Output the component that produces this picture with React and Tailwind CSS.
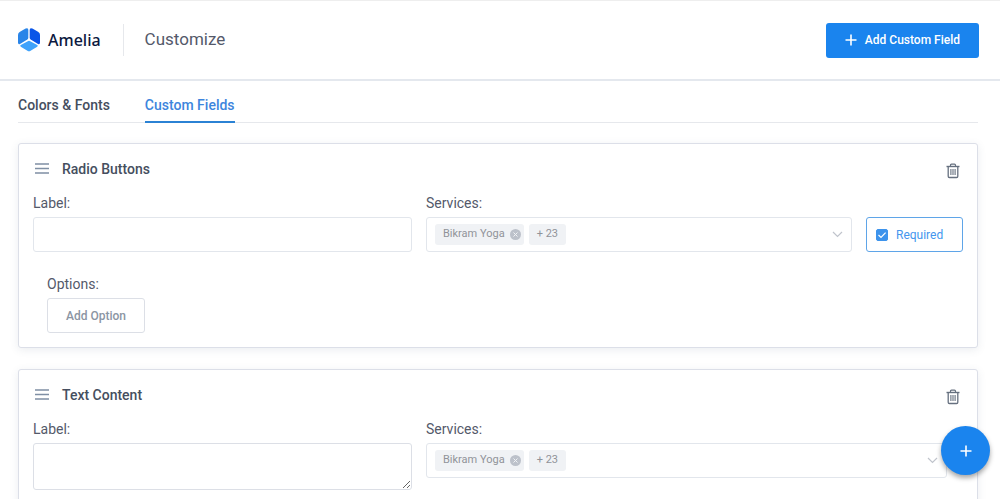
import React, { useState } from 'react';

const Logo = () => (
  <div className="flex items-center gap-[7px]">
    <svg width="24" height="26" viewBox="0 0 24 26" aria-hidden="true">
      <path d="M8.6 1.6 Q11.3 .4 11.3 3 V10.8 Q11.3 12 10.3 12.6 L3 16.9 Q1 17.8 1 15.6 V8 Q1 6 2.6 5 Z" fill="#2a85e8" />
      <path d="M15.4 1.6 Q12.7 .4 12.7 3 V10.8 Q12.7 12 13.7 12.6 L21 16.9 Q23 17.8 23 15.6 V8 Q23 6 21.4 5 Z" fill="#0a55e8" />
      <path d="M10.8 14.2 Q12 13.5 13.2 14.2 L20.2 18.1 Q21.5 18.9 20.2 19.7 L13.6 23.8 Q12 24.8 10.4 23.8 L3.8 19.7 Q2.5 18.9 3.8 18.1 Z" fill="#3fa2fb" />
    </svg>
    <span className="font-['Noto_Sans',sans-serif] text-base font-medium text-[#0b1840]">Amelia</span>
  </div>
);

const PlusIcon = ({ size }) => (
  <svg width={size} height={size} viewBox="0 0 12 12" fill="none" stroke="currentColor" strokeWidth="1.6" aria-hidden="true">
    <path d="M6 0.5v11M0.5 6h11" />
  </svg>
);

const TrashIcon = () => (
  <svg width="14" height="16" viewBox="0 0 14 16" fill="none" stroke="currentColor" aria-hidden="true">
    <path d="M0.5 3.5h13" strokeWidth="1.4" />
    <path d="M4.5 3.2V2.2Q4.5 1.2 5.5 1.2h3Q9.5 1.2 9.5 2.2v1" strokeWidth="1.2" />
    <path d="M2.2 3.8V13.3Q2.2 14.5 3.4 14.5h7.2Q11.8 14.5 11.8 13.3V3.8" strokeWidth="1.3" />
    <path d="M4.9 6v6M7 6v6M9.1 6v6" strokeWidth="1.1" />
  </svg>
);

const ServicesSelect = ({ id }) => {
  const [first, setFirst] = useState(true);

  return (
    <div className="relative">
      <select
        id={id}
        className="block h-[35px] w-full appearance-none rounded-[3px] border border-[#e2e6ec] bg-white text-transparent outline-none"
      >
        <option value=""></option>
      </select>
      <div className="pointer-events-none absolute inset-y-0 left-[9px] flex items-center gap-[5px] text-[11px] text-[#909399]">
        {first && (
          <span className="flex h-[21px] items-center gap-[5px] rounded-[3px] bg-[#f0f2f5] pr-[3px] pl-2">
            Bikram Yoga
            <button
              type="button"
              aria-label="Remove Bikram Yoga"
              onClick={() => setFirst(false)}
              className="pointer-events-auto flex size-[11px] items-center justify-center rounded-full bg-[#bcc1ca] text-[#f0f2f5]"
            >
              <svg width="5" height="5" viewBox="0 0 5 5" stroke="currentColor" aria-hidden="true">
                <path d="M0.5 0.5l4 4M4.5 0.5l-4 4" />
              </svg>
            </button>
          </span>
        )}
        <span className="flex h-[21px] items-center rounded-[3px] bg-[#f0f2f5] px-2">+ 23</span>
      </div>
      <svg
        className="pointer-events-none absolute top-[14px] right-[9px] text-[#c0c4cc]"
        width="11"
        height="7"
        viewBox="0 0 11 7"
        fill="none"
        stroke="currentColor"
        strokeWidth="1.2"
        aria-hidden="true"
      >
        <path d="M1 1l4.5 4.5L10 1" />
      </svg>
    </div>
  );
};

const FieldCard = ({ title, children }) => (
  <section className="rounded-[3px] border border-[#dcdfe8] bg-white px-[14px] pb-[14px] shadow-[0_2px_8px_rgba(60,80,110,0.1)]">
    <div className="flex h-[49px] items-center justify-between">
      <div className="flex items-center gap-[13px] pl-[2px]">
        <svg width="14" height="11" viewBox="0 0 14 11" stroke="#7f8fa4" strokeWidth="1.4" aria-hidden="true">
          <path d="M0 1h14M0 5.5h14M0 10h14" />
        </svg>
        <h2 className="text-sm font-medium text-[#454e5e]">{title}</h2>
      </div>
      <button type="button" aria-label={'Delete ' + title} className="mt-1 mr-[3px] text-[#66707f]">
        <TrashIcon />
      </button>
    </div>
    {children}
  </section>
);

const labelClass = 'mb-1 block text-sm';

const App = () => {
  const [required, setRequired] = useState(true);

  return (
    <div className="h-screen overflow-hidden border-t border-[#eeeeee] bg-white font-[Roboto,sans-serif] text-[#54596a]">
      <header className="flex h-20 items-center justify-between border-b-2 border-[#e4e8ee] pr-[21px] pl-[17px]">
        <div className="flex items-center">
          <Logo />
          <h1 className="ml-[22px] flex h-8 items-center border-l border-[#e6e8ec] pl-[21px] text-[17px]">Customize</h1>
        </div>
        <button type="button" className="flex h-[35px] items-center gap-2 rounded-[3px] bg-[#1a84ee] px-[19px] text-xs font-medium text-white">
          <PlusIcon size={12} />
          Add Custom Field
        </button>
      </header>

      <main className="pr-[22px] pl-[18px]">
        <nav className="flex gap-[35px] border-b border-[#e6e8ec] text-sm font-medium">
          <a href="#fonts" className="flex h-[41px] items-center pt-[7px] text-[#454e5e]">Colors &amp; Fonts</a>
          <a href="#fields" className="-mb-px flex h-[42px] items-center border-b-2 border-[#2b82d4] pt-2 text-[#3d85dd]">Custom Fields</a>
        </nav>

        <div className="mt-5 flex flex-col gap-[21px]">
          <FieldCard title="Radio Buttons">
            <div className="grid grid-cols-[379fr_426fr_97fr] items-end gap-[14px]">
              <div>
                <label htmlFor="radio-label" className={labelClass}>Label:</label>
                <input id="radio-label" type="text" className="block h-[35px] w-full rounded-[3px] border border-[#e2e6ec] px-3 outline-none" />
              </div>
              <div>
                <label htmlFor="radio-services" className={labelClass}>Services:</label>
                <ServicesSelect id="radio-services" />
              </div>
              <label className="flex h-[35px] items-center gap-2 rounded-[3px] border border-[#5fa5e8] px-[9px] text-xs text-[#4496ee]">
                <span className="relative flex">
                  <input
                    type="checkbox"
                    checked={required}
                    onChange={(e) => setRequired(e.target.checked)}
                    className="size-3 appearance-none rounded-[2px] border border-[#3d93ec] checked:bg-[#3d93ec]"
                  />
                  {required && (
                    <svg className="pointer-events-none absolute inset-0" width="12" height="12" viewBox="0 0 12 12" fill="none" stroke="#fff" strokeWidth="1.2" aria-hidden="true">
                      <path d="M2.5 6l2.5 2.5L9.6 3.6" />
                    </svg>
                  )}
                </span>
                Required
              </label>
            </div>
            <div className="mt-[22px] pl-[14px]">
              <p className={labelClass}>Options:</p>
              <button type="button" className="h-[35px] rounded-[3px] border border-[#dcdfe6] px-[18px] text-xs font-medium text-[#8b95a3]">
                Add Option
              </button>
            </div>
          </FieldCard>

          <FieldCard title="Text Content">
            <div className="grid grid-cols-[379fr_426fr_97fr] items-start gap-[14px]">
              <div>
                <label htmlFor="text-label" className={labelClass}>Label:</label>
                <textarea id="text-label" className="block h-[47px] w-full resize-y rounded-[3px] border border-[#dcdfe6] px-3 outline-none" />
              </div>
              <div className="col-span-2 mr-4">
                <label htmlFor="text-services" className={labelClass}>Services:</label>
                <ServicesSelect id="text-services" />
              </div>
            </div>
          </FieldCard>
        </div>
      </main>

      <button
        type="button"
        aria-label="Add"
        className="fixed right-[10px] bottom-6 flex size-[49px] items-center justify-center rounded-full bg-[#1a84ee] text-white shadow-[0_3px_5px_rgba(0,0,0,0.35)]"
      >
        <PlusIcon size={12} />
      </button>
    </div>
  );
};

export default App;
